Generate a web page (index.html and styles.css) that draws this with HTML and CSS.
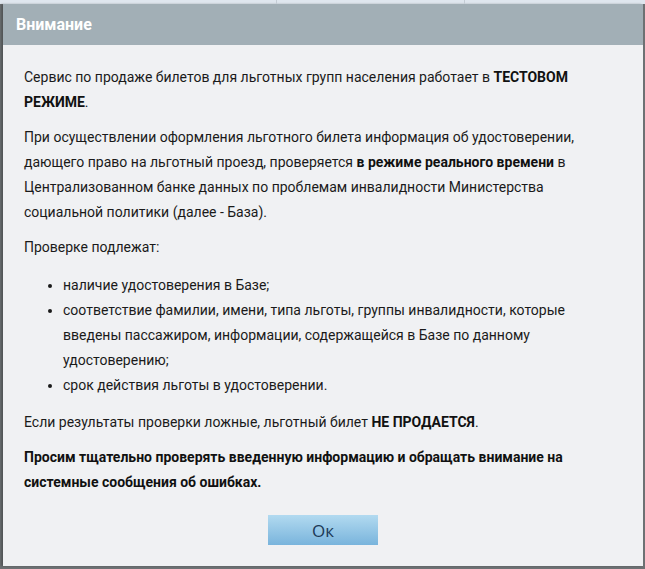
FILE: index.html
```html
<!DOCTYPE html>
<html lang="ru">
<head>
    <meta charset="UTF-8">
    <meta name="viewport" content="width=device-width, initial-scale=1.0">
    <title>Внимание</title>
    <link rel="stylesheet" href="styles.css">
</head>
<body>

<div class="page-top">
    <span class="col-line"></span>
    <span class="col-line"></span>
</div>

<div class="dialog">
    <div class="dialog-header">Внимание</div>

    <div class="dialog-body">
        <p>Сервис по продаже билетов для льготных групп населения работает в <b>ТЕСТОВОМ РЕЖИМЕ</b>.</p>

        <p>При осуществлении оформления льготного билета информация об удостоверении, дающего право на льготный проезд, проверяется <b>в режиме реального времени</b> в Централизованном банке данных по проблемам инвалидности Министерства социальной политики (далее - База).</p>

        <p>Проверке подлежат:</p>

        <ul class="checks">
            <li>наличие удостоверения в Базе;</li>
            <li>соответствие фамилии, имени, типа льготы, группы инвалидности, которые введены пассажиром, информации, содержащейся в Базе по данному удостоверению;</li>
            <li>срок действия льготы в удостоверении.</li>
        </ul>

        <p>Если результаты проверки ложные, льготный билет <b>НЕ ПРОДАЕТСЯ</b>.</p>

        <p><b>Просим тщательно проверять введенную информацию и обращать внимание на системные сообщения об ошибках.</b></p>
    </div>

    <div class="dialog-footer">
        <button class="btn-ok">Ок</button>
    </div>
</div>

</body>
</html>
```

FILE: styles.css
```css
body {
    margin: 0;
    height: 569px;
    overflow: hidden;
    background-color: #6d7173;
    font-family: Roboto, "Liberation Sans", sans-serif;
}

/* Полоска страницы за диалогом */
.page-top {
    height: 4px;
    background-color: #dfe6ee;
    display: flex;
    padding-left: 276px;
    gap: 187px;
}

.col-line {
    width: 1px;
    background-color: #c4ccd4;
}

.dialog {
    margin: 0 2px 0 3px;
    height: 562px;
    background-color: #f0f1f3;
    display: flex;
    flex-direction: column;
    box-shadow: -2px 0 2px rgba(0, 0, 0, 0.25);
}

.dialog-header {
    height: 41px;
    background-color: #a2afb6;
    color: #fff;
    font-weight: bold;
    font-size: 16px;
    line-height: 42px;
    padding-left: 13px;
}

.dialog-body {
    padding: 20px 20px 0 21px;
    font-size: 14px;
    line-height: 25px;
    color: #1a1a1a;
}

.dialog-body p {
    margin: 0 0 10px;
}

.dialog-body b {
    color: #111;
}

.checks {
    margin: 13px 0 12px;
    padding-left: 39px;
    line-height: 25px;
}

.dialog-footer {
    display: flex;
    justify-content: center;
    padding-top: 10px;
}

.btn-ok {
    width: 110px;
    height: 30px;
    border: none;
    background: linear-gradient(to bottom, #b2daf0, #79b4dc);
    color: #1c3956;
    font-family: "Open Sans", sans-serif;
    font-size: 17px;
    cursor: pointer;
}
```
